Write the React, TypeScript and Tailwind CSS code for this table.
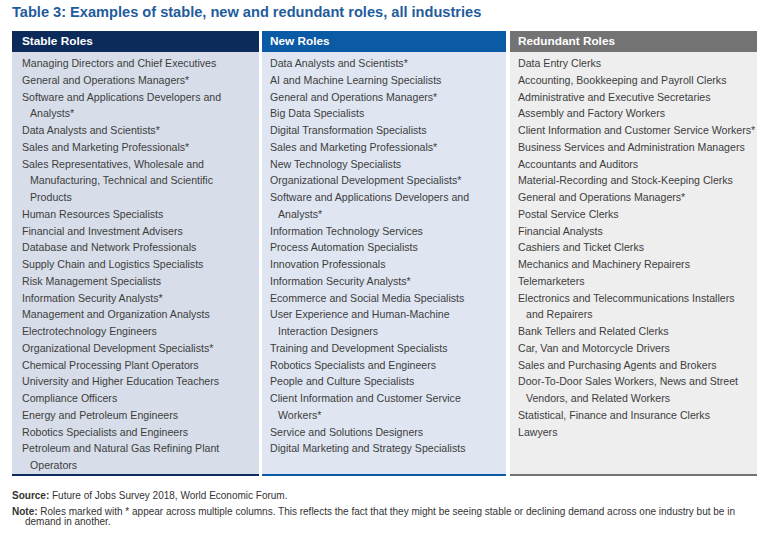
import React from "react";

const stable: string[][] = [
  ["Managing Directors and Chief Executives"],
  ["General and Operations Managers*"],
  ["Software and Applications Developers and", "Analysts*"],
  ["Data Analysts and Scientists*"],
  ["Sales and Marketing Professionals*"],
  ["Sales Representatives, Wholesale and", "Manufacturing, Technical and Scientific", "Products"],
  ["Human Resources Specialists"],
  ["Financial and Investment Advisers"],
  ["Database and Network Professionals"],
  ["Supply Chain and Logistics Specialists"],
  ["Risk Management Specialists"],
  ["Information Security Analysts*"],
  ["Management and Organization Analysts"],
  ["Electrotechnology Engineers"],
  ["Organizational Development Specialists*"],
  ["Chemical Processing Plant Operators"],
  ["University and Higher Education Teachers"],
  ["Compliance Officers"],
  ["Energy and Petroleum Engineers"],
  ["Robotics Specialists and Engineers"],
  ["Petroleum and Natural Gas Refining Plant", "Operators"],
];

const newer: string[][] = [
  ["Data Analysts and Scientists*"],
  ["AI and Machine Learning Specialists"],
  ["General and Operations Managers*"],
  ["Big Data Specialists"],
  ["Digital Transformation Specialists"],
  ["Sales and Marketing Professionals*"],
  ["New Technology Specialists"],
  ["Organizational Development Specialists*"],
  ["Software and Applications Developers and", "Analysts*"],
  ["Information Technology Services"],
  ["Process Automation Specialists"],
  ["Innovation Professionals"],
  ["Information Security Analysts*"],
  ["Ecommerce and Social Media Specialists"],
  ["User Experience and Human-Machine", "Interaction Designers"],
  ["Training and Development Specialists"],
  ["Robotics Specialists and Engineers"],
  ["People and Culture Specialists"],
  ["Client Information and Customer Service", "Workers*"],
  ["Service and Solutions Designers"],
  ["Digital Marketing and Strategy Specialists"],
];

const redundant: string[][] = [
  ["Data Entry Clerks"],
  ["Accounting, Bookkeeping and Payroll Clerks"],
  ["Administrative and Executive Secretaries"],
  ["Assembly and Factory Workers"],
  ["Client Information and Customer Service Workers*"],
  ["Business Services and Administration Managers"],
  ["Accountants and Auditors"],
  ["Material-Recording and Stock-Keeping Clerks"],
  ["General and Operations Managers*"],
  ["Postal Service Clerks"],
  ["Financial Analysts"],
  ["Cashiers and Ticket Clerks"],
  ["Mechanics and Machinery Repairers"],
  ["Telemarketers"],
  ["Electronics and Telecommunications Installers", "and Repairers"],
  ["Bank Tellers and Related Clerks"],
  ["Car, Van and Motorcycle Drivers"],
  ["Sales and Purchasing Agents and Brokers"],
  ["Door-To-Door Sales Workers, News and Street", "Vendors, and Related Workers"],
  ["Statistical, Finance and Insurance Clerks"],
  ["Lawyers"],
];

function Items({ items }: { items: string[][] }) {
  return (
    <ul className="pt-[3px]">
      {items.map((lines, i) => (
        <li key={i}>
          {lines.map((l, j) => (
            <div key={j} className={j === 0 ? "whitespace-nowrap" : "whitespace-nowrap pl-[8px]"}>
              {l}
            </div>
          ))}
        </li>
      ))}
    </ul>
  );
}

export default function App() {
  return (
    <div
      className="w-[770px] h-[538px] bg-white px-[12px] pt-[3px] overflow-hidden"
      style={{ fontFamily: '"Liberation Sans", Arial, sans-serif' }}
    >
      <h1 className="text-[14.6px] leading-[18px] font-bold text-[#1f5c9d] whitespace-nowrap">
        Table 3: Examples of stable, new and redundant roles, all industries
      </h1>
      <div className="mt-[10px] flex items-stretch text-[10.6px] leading-[16.75px] text-[#3d3d3d]">
        <div className="w-[247px] flex flex-col">
          <div className="h-[21px] bg-[#0c2b5a] text-white font-bold text-[11.8px] flex items-center pl-[10px]">
            Stable Roles
          </div>
          <div className="flex-1 bg-[#d7dde9] border-b-2 border-[#0c2b5a] pl-[10px]">
            <Items items={stable} />
          </div>
        </div>
        <div className="w-[244px] ml-[3px] flex flex-col">
          <div className="h-[21px] bg-[#0b5aa5] text-white font-bold text-[11.8px] flex items-center pl-[8px]">
            New Roles
          </div>
          <div className="flex-1 bg-[#dfe6f2] border-b-2 border-[#0b5aa5] pl-[8px]">
            <Items items={newer} />
          </div>
        </div>
        <div className="w-[247px] ml-[4px] flex flex-col">
          <div className="h-[21px] bg-[#737373] text-white font-bold text-[11.8px] flex items-center pl-[8px]">
            Redundant Roles
          </div>
          <div className="flex-1 bg-[#eeeeee] border-b-2 border-[#737373] pl-[8px]">
            <Items items={redundant} />
          </div>
        </div>
      </div>
      <div className="mt-[13px] text-[10px] text-[#333333] w-[745px]">
        <p className="leading-[14px] whitespace-nowrap">
          <span className="font-bold">Source:</span> Future of Jobs Survey 2018, World Economic Forum.
        </p>
        <p className="mt-[4px] leading-[10.5px] pl-[13px] -indent-[13px]">
          <span className="font-bold">Note:</span> Roles marked with * appear across multiple columns. This reflects the fact that they might be seeing stable or declining demand across one industry but be in
          <br />
          demand in another.
        </p>
      </div>
    </div>
  );
}
